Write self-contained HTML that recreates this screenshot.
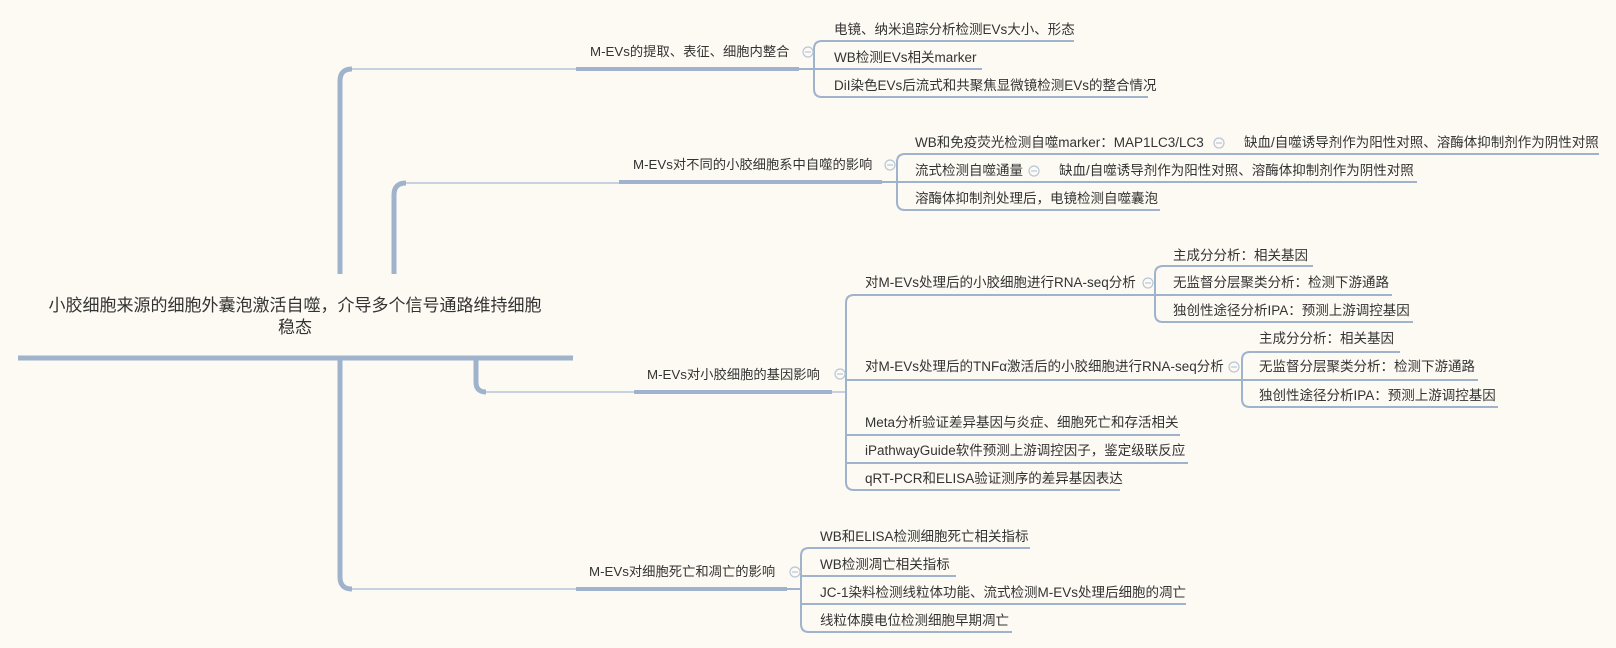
<!DOCTYPE html>
<html><head><meta charset="utf-8"><style>
html,body{margin:0;padding:0;width:1616px;height:648px;overflow:hidden;background:#fdfaf3;}
.t{position:absolute;white-space:nowrap;font-family:"Liberation Sans","Noto Sans CJK SC",sans-serif;font-size:13.5px;color:#333;line-height:20px;height:20px;}
.m{font-size:13.3px;}
.r{font-size:17px;line-height:22px;text-align:center;width:500px;left:45px;white-space:normal;}
svg{position:absolute;left:0;top:0;}
</style></head><body>
<svg width="1616" height="648" fill="none" stroke-linecap="butt">
<g stroke="#c6d2e1" stroke-width="2">
<path d="M352 69 H576"/>
<path d="M404 183 H619"/>
<path d="M486 392 H634"/>
<path d="M347 589 H576"/>
<path d="M832 392 H846"/>
</g>
<g stroke="#9fb3cc" stroke-width="5">
<path d="M18 358 H573"/>
<path d="M340 274 V81 Q340 69 352 69"/>
<path d="M394 274 V195 Q394 183 406 183"/>
<path d="M340 358 V577 Q340 589 352 589"/>
<path d="M476 358 V382 Q476 392 486 392"/>
</g>
<g stroke="#9fb3cc" stroke-width="4">
<path d="M576 69 H799"/>
<path d="M619 182 H882"/>
<path d="M634 392 H832"/>
<path d="M576 589 H787"/>
</g>
<g stroke="#9fb3cc" stroke-width="2">
<path d="M814 69 V49 Q814 41 822 41 H1074"/>
<path d="M814 69 H982"/>
<path d="M799 69 H814 V89 Q814 97 822 97 H1148"/>
<path d="M897 182 V162 Q897 154 905 154 H1599"/>
<path d="M882 182 H1417"/>
<path d="M897 182 V202 Q897 210 905 210 H1160"/>
<path d="M846 392 V303 Q846 295 854 295 H1155"/>
<path d="M846 380 H1241"/>
<path d="M846 392 V482 Q846 490 854 490 H1120"/>
<path d="M846 435 H1180"/>
<path d="M846 463 H1188"/>
<path d="M1155 295 V274 Q1155 266 1163 266 H1313"/>
<path d="M1155 295 H1392"/>
<path d="M1155 295 V314 Q1155 322 1163 322 H1413"/>
<path d="M1242 380 V360 Q1242 352 1250 352 H1400"/>
<path d="M1242 380 H1478"/>
<path d="M1242 380 V399 Q1242 407 1250 407 H1498"/>
<path d="M787 589 H801"/>
<path d="M801 589 V556 Q801 548 809 548 H1030"/>
<path d="M801 576 H956"/>
<path d="M801 604 H1186"/>
<path d="M801 589 V624 Q801 632 809 632 H1012"/>
</g>
<g stroke="#b8c6d8" stroke-width="1.2">
<circle cx="808" cy="52" r="5"/><path d="M805 52 H811"/>
<circle cx="890" cy="165" r="5"/><path d="M887 165 H893"/>
<circle cx="1219" cy="143" r="5"/><path d="M1216 143 H1222"/>
<circle cx="1034" cy="171" r="5"/><path d="M1031 171 H1037"/>
<circle cx="840" cy="374" r="5"/><path d="M837 374 H843"/>
<circle cx="1148" cy="283" r="5"/><path d="M1145 283 H1151"/>
<circle cx="1234" cy="367" r="5"/><path d="M1231 367 H1237"/>
<circle cx="795" cy="572" r="5"/><path d="M792 572 H798"/>
</g>
</svg>
<div class="t r" style="top:295px;height:44px;">小胶细胞来源的细胞外囊泡激活自噬，介导多个信号通路维持细胞<br>稳态</div>

<div class="t m" style="left:590px;top:42px">M-EVs的提取、表征、细胞内整合</div>
<div class="t" style="left:834px;top:20px">电镜、纳米追踪分析检测EVs大小、形态</div>
<div class="t" style="left:834px;top:48px">WB检测EVs相关marker</div>
<div class="t" style="left:834px;top:76px">DiI染色EVs后流式和共聚焦显微镜检测EVs的整合情况</div>

<div class="t m" style="left:633px;top:155px">M-EVs对不同的小胶细胞系中自噬的影响</div>
<div class="t" style="left:915px;top:133px">WB和免疫荧光检测自噬marker：MAP1LC3/LC3</div>
<div class="t" style="left:1244px;top:133px">缺血/自噬诱导剂作为阳性对照、溶酶体抑制剂作为阴性对照</div>
<div class="t" style="left:915px;top:161px">流式检测自噬通量</div>
<div class="t" style="left:1059px;top:161px">缺血/自噬诱导剂作为阳性对照、溶酶体抑制剂作为阴性对照</div>
<div class="t" style="left:915px;top:189px">溶酶体抑制剂处理后，电镜检测自噬囊泡</div>

<div class="t m" style="left:647px;top:365px">M-EVs对小胶细胞的基因影响</div>
<div class="t" style="left:865px;top:273px">对M-EVs处理后的小胶细胞进行RNA-seq分析</div>
<div class="t" style="left:1173px;top:246px">主成分分析：相关基因</div>
<div class="t" style="left:1173px;top:273px">无监督分层聚类分析：检测下游通路</div>
<div class="t" style="left:1173px;top:301px">独创性途径分析IPA：预测上游调控基因</div>
<div class="t" style="left:865px;top:357px">对M-EVs处理后的TNFα激活后的小胶细胞进行RNA-seq分析</div>
<div class="t" style="left:1259px;top:329px">主成分分析：相关基因</div>
<div class="t" style="left:1259px;top:357px">无监督分层聚类分析：检测下游通路</div>
<div class="t" style="left:1259px;top:386px">独创性途径分析IPA：预测上游调控基因</div>
<div class="t" style="left:865px;top:413px">Meta分析验证差异基因与炎症、细胞死亡和存活相关</div>
<div class="t" style="left:865px;top:441px">iPathwayGuide软件预测上游调控因子，鉴定级联反应</div>
<div class="t" style="left:865px;top:469px">qRT-PCR和ELISA验证测序的差异基因表达</div>

<div class="t m" style="left:589px;top:562px">M-EVs对细胞死亡和凋亡的影响</div>
<div class="t" style="left:820px;top:527px">WB和ELISA检测细胞死亡相关指标</div>
<div class="t" style="left:820px;top:555px">WB检测凋亡相关指标</div>
<div class="t" style="left:820px;top:583px">JC-1染料检测线粒体功能、流式检测M-EVs处理后细胞的凋亡</div>
<div class="t" style="left:820px;top:611px">线粒体膜电位检测细胞早期凋亡</div>
</body></html>
